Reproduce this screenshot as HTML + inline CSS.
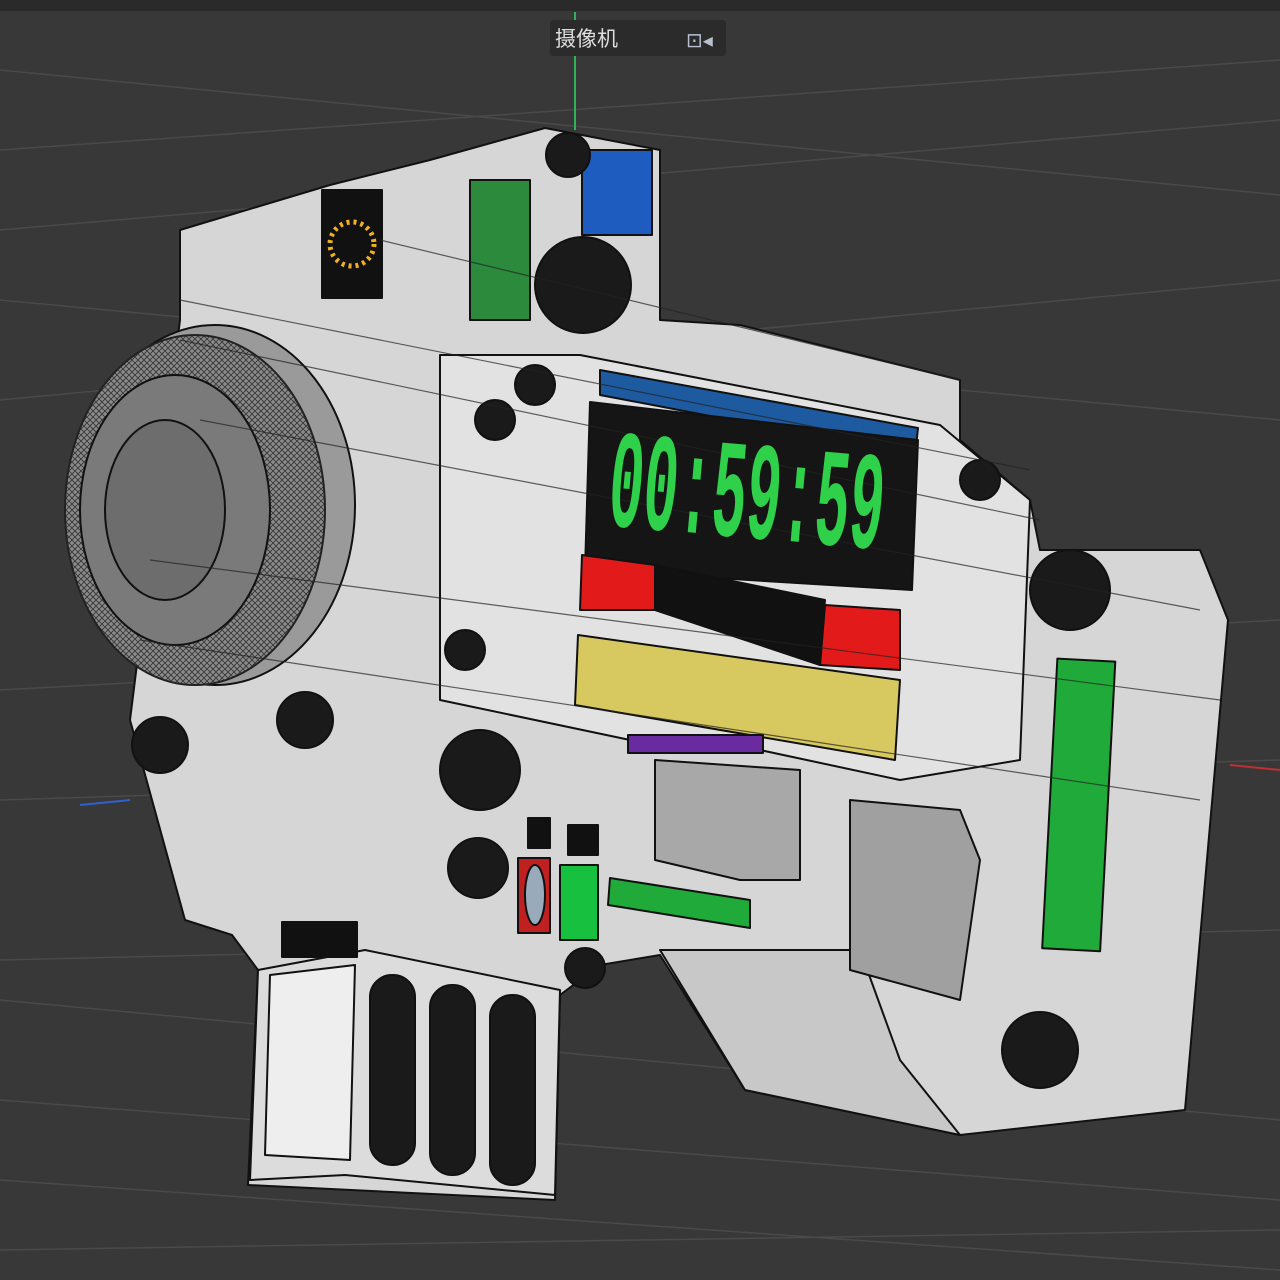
<!DOCTYPE html>
<html><head><meta charset="utf-8"><style>
html,body{margin:0;padding:0;background:#383838;width:1280px;height:1280px;overflow:hidden}
svg{display:block}
</style></head><body>
<svg width="1280" height="1280" viewBox="0 0 1280 1280" xmlns="http://www.w3.org/2000/svg">
<defs>
<pattern id="mesh" width="6" height="6" patternUnits="userSpaceOnUse">
<rect width="6" height="6" fill="#8a8a8a"/>
<path d="M0 0L6 6M6 0L0 6" stroke="#333" stroke-width="0.8"/>
</pattern>
</defs>
<rect width="1280" height="1280" fill="#383838"/>
<rect width="1280" height="11" fill="#2a2a2a"/>
<g stroke="#4a4a4a" stroke-width="1.5" fill="none">
<line x1="0" y1="70" x2="1280" y2="195"/>
<line x1="0" y1="150" x2="1280" y2="60"/>
<line x1="0" y1="230" x2="1280" y2="120"/>
<line x1="0" y1="300" x2="1280" y2="420"/>
<line x1="0" y1="400" x2="1280" y2="280"/>
<line x1="0" y1="690" x2="1280" y2="620"/>
<line x1="0" y1="800" x2="1280" y2="760"/>
<line x1="0" y1="1000" x2="1280" y2="1120"/>
<line x1="0" y1="1100" x2="1280" y2="1200"/>
<line x1="0" y1="1180" x2="1280" y2="1270"/>
<line x1="0" y1="960" x2="1280" y2="930"/>
<line x1="0" y1="1250" x2="1280" y2="1230"/>
</g>
<line x1="575" y1="12" x2="575" y2="130" stroke="#2fb35a" stroke-width="2"/>
<line x1="80" y1="805" x2="130" y2="800" stroke="#3060d0" stroke-width="2"/>
<line x1="1230" y1="765" x2="1280" y2="770" stroke="#c03030" stroke-width="2"/>
<rect x="550" y="20" width="176" height="36" rx="3" fill="#2b2b2b"/>
<text x="555" y="46" font-family="Liberation Sans, Noto Sans CJK SC, sans-serif" font-size="21" fill="#ddd">摄像机</text>
<text x="686" y="47" font-family="Liberation Sans, sans-serif" font-size="20" fill="#b8c0d0">⊡◂</text>

<g stroke="#111" stroke-width="2" stroke-linejoin="round">
<polygon fill="#d6d6d6" points="180,230 330,185 430,160 545,128 660,150 660,320 740,325 960,380 960,440 1030,500 1040,550 1200,550 1228,620 1185,1110 960,1135 745,1090 660,955 600,965 560,995 555,1200 248,1185 258,970 232,935 185,920 130,720 180,320"/>
<polygon fill="#c8c8c8" points="660,950 745,1090 960,1135 900,1060 860,950"/>
<polygon fill="#e2e2e2" points="440,355 580,355 940,425 1030,500 1020,760 900,780 760,750 630,740 440,700"/>
<polygon fill="#dcdcdc" points="258,970 365,950 560,990 555,1195 345,1175 250,1180"/>
<rect x="370" y="975" width="45" height="190" rx="22" fill="#1a1a1a"/>
<rect x="430" y="985" width="45" height="190" rx="22" fill="#1a1a1a"/>
<rect x="490" y="995" width="45" height="190" rx="22" fill="#1a1a1a"/>
<polygon fill="#eee" points="270,975 355,965 350,1160 265,1155"/>
<ellipse cx="215" cy="505" rx="140" ry="180" fill="#9a9a9a"/>
<ellipse cx="195" cy="510" rx="130" ry="175" fill="url(#mesh)" stroke="#222"/>
<ellipse cx="175" cy="510" rx="95" ry="135" fill="#7a7a7a"/>
<ellipse cx="165" cy="510" rx="60" ry="90" fill="#6d6d6d"/>
<rect x="322" y="190" width="60" height="108" fill="#111"/>
<rect x="470" y="180" width="60" height="140" fill="#2c8a3d"/>
<rect x="582" y="150" width="70" height="85" fill="#1e5cc0"/>
<circle cx="583" cy="285" r="48" fill="#1a1a1a"/>
<circle cx="568" cy="155" r="22" fill="#1a1a1a"/>
<polygon fill="#1e5aa0" points="600,370 918,428 915,455 600,395"/>
<polygon fill="#151515" points="590,402 918,440 912,590 585,570"/>
<polygon fill="#e31a1a" points="582,555 655,565 655,610 580,610"/>
<polygon fill="#e31a1a" points="825,605 900,610 900,670 820,665"/>
<polygon fill="#111" points="655,565 825,600 820,665 655,610"/>
<polygon fill="#d8c860" points="578,635 900,680 895,760 575,705"/>
<rect x="628" y="735" width="135" height="18" fill="#6a2aa0"/>
<rect x="1050" y="660" width="58" height="290" fill="#1faa3a" transform="rotate(3 1080 800)"/>
<polygon fill="#1faa3a" points="610,878 750,900 750,928 608,905"/>
<polygon fill="#a8a8a8" points="655,760 800,770 800,880 740,880 655,860"/>
<polygon fill="#a0a0a0" points="850,800 960,810 980,860 960,1000 850,970"/>
<circle cx="160" cy="745" r="28" fill="#1a1a1a"/>
<circle cx="305" cy="720" r="28" fill="#1a1a1a"/>
<circle cx="480" cy="770" r="40" fill="#1a1a1a"/>
<circle cx="478" cy="868" r="30" fill="#1a1a1a"/>
<circle cx="535" cy="385" r="20" fill="#1a1a1a"/>
<circle cx="495" cy="420" r="20" fill="#1a1a1a"/>
<circle cx="980" cy="480" r="20" fill="#1a1a1a"/>
<circle cx="1070" cy="590" r="40" fill="#1a1a1a"/>
<circle cx="1040" cy="1050" r="38" fill="#1a1a1a"/>
<circle cx="585" cy="968" r="20" fill="#1a1a1a"/>
<circle cx="465" cy="650" r="20" fill="#1a1a1a"/>
<rect x="528" y="818" width="22" height="30" fill="#111"/>
<rect x="568" y="825" width="30" height="30" fill="#111"/>
<rect x="518" y="858" width="32" height="75" fill="#c02020"/>
<ellipse cx="535" cy="895" rx="10" ry="30" fill="#9ab"/>
<rect x="560" y="865" width="38" height="75" fill="#18c040"/>
<rect x="282" y="922" width="75" height="35" fill="#111"/>
</g>
<g stroke="#222" stroke-width="1.2" opacity="0.7">
<line x1="180" y1="300" x2="1030" y2="470"/>
<line x1="180" y1="340" x2="1040" y2="520"/>
<line x1="200" y1="420" x2="1200" y2="610"/>
<line x1="150" y1="560" x2="1220" y2="700"/>
<line x1="140" y1="640" x2="1200" y2="800"/>
<line x1="380" y1="240" x2="960" y2="380"/>
</g>
<g transform="translate(606 525) rotate(5) scale(0.41 1)">
<text x="0" y="0" font-family="Liberation Mono, monospace" font-weight="bold" font-size="140" fill="#2fd04a">00:59:59</text>
</g>
<circle cx="352" cy="244" r="22" fill="none" stroke="#f0b020" stroke-width="5" stroke-dasharray="3 4"/>
</svg>
</body></html>
